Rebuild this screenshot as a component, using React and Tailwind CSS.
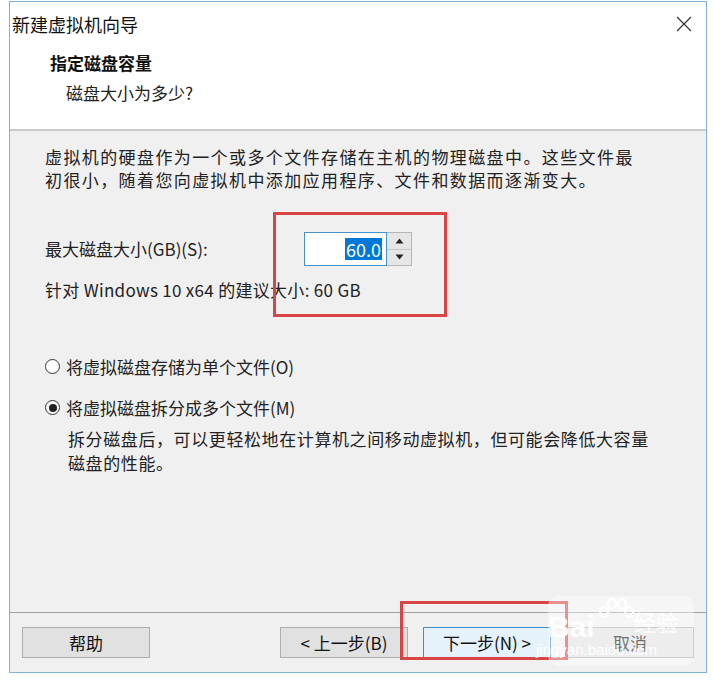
import { useState } from 'react'

const CJK = { fontFamily: '"Microsoft YaHei", "Noto Sans CJK SC", "Noto Sans", sans-serif' }

function Radio({ checked }) {
  return (
    <span className="w-[15px] h-[15px] rounded-full border border-[#333] bg-white flex items-center justify-center shrink-0">
      {checked && <span className="w-[8px] h-[8px] rounded-full bg-[#222]" />}
    </span>
  )
}

function Button({ children, active }) {
  return (
    <button
      className={`h-[31px] w-[128px] border text-[17px] text-[#111] flex items-center justify-center ${
        active ? 'border-[#3c8fd6] bg-[#e5f1fb]' : 'border-[#adadad] bg-[#e1e1e1]'
      }`}
    >
      {children}
    </button>
  )
}

function Spinner() {
  return (
    <div className="flex h-[34px]">
      <div className="w-[83px] border border-[#4a90c8] bg-white flex items-center justify-end pr-[4px]">
        <span className="bg-[#0078d7] text-white text-[18px] leading-[22px] px-[1px]">60.0</span>
      </div>
      <div className="w-[25px] flex flex-col border border-[#b5b5b5] border-l-0">
        <div className="flex-1 flex items-center justify-center bg-[#e6e6e6] border-b border-[#c8c8c8]">
          <svg width="9" height="6" viewBox="0 0 9 6"><path d="M0.5 5.5 L4.5 0.5 L8.5 5.5 Z" fill="#222" /></svg>
        </div>
        <div className="flex-1 flex items-center justify-center bg-[#e6e6e6]">
          <svg width="9" height="6" viewBox="0 0 9 6"><path d="M0.5 0.5 L4.5 5.5 L8.5 0.5 Z" fill="#222" /></svg>
        </div>
      </div>
    </div>
  )
}

export default function App() {
  const [split] = useState(true)

  return (
    <div className="w-[714px] h-[680px] bg-white relative overflow-hidden" style={CJK}>
      <div className="ml-[9px] mt-[1px] w-[698px] h-[672px] border border-[#7fb2dc] flex flex-col">
        {/* Title + header */}
        <div className="h-[129px] bg-white border-b-2 border-[#c9c9c9] flex flex-col">
          <div className="h-[44px] flex items-center justify-between pl-[2px] pr-[14px]">
            <span className="text-[18px] text-[#111]">新建虚拟机向导</span>
            <svg width="16" height="16" viewBox="0 0 16 16">
              <path d="M1 1 L15 15 M15 1 L1 15" stroke="#333" strokeWidth="1.2" />
            </svg>
          </div>
          <div className="pl-[40px] pt-[4px]">
            <p className="text-[17px] font-bold text-[#111] leading-[26px]">指定磁盘容量</p>
            <p className="text-[17px] text-[#222] leading-[26px] pl-[16px] mt-[4px]">磁盘大小为多少?</p>
          </div>
        </div>

        {/* Body */}
        <div className="flex-1 bg-[#f0f0f0] pl-[35px] pt-[14px] text-[17px] text-[#222]">
          <p className="leading-[23px] tracking-[1.4px]">
            虚拟机的硬盘作为一个或多个文件存储在主机的物理磁盘中。这些文件最
            <br />
            初很小，随着您向虚拟机中添加应用程序、文件和数据而逐渐变大。
          </p>

          <div className="flex items-center mt-[41px]">
            <span className="w-[259px]">最大磁盘大小(GB)(S):</span>
            <Spinner />
          </div>
          <p className="mt-[11px] tracking-[0.3px]">针对 Windows 10 x64 的建议大小: 60 GB</p>

          <div className="flex items-center gap-[6px] mt-[51px]">
            <Radio checked={!split} />
            <span>将虚拟磁盘存储为单个文件(O)</span>
          </div>
          <div className="flex items-center gap-[6px] mt-[16px]">
            <Radio checked={split} />
            <span>将虚拟磁盘拆分成多个文件(M)</span>
          </div>
          <p className="pl-[23px] mt-[6px] leading-[24px] tracking-[0.6px]">
            拆分磁盘后，可以更轻松地在计算机之间移动虚拟机，但可能会降低大容量
            <br />
            磁盘的性能。
          </p>
        </div>

        {/* Footer */}
        <div className="h-[60px] bg-[#f0f0f0] border-t border-[#a0a0a0] flex items-start pt-[14px] pl-[12px]">
          <Button>帮助</Button>
          <div className="ml-[130px] flex gap-[15px]">
            <Button>&lt; 上一步(B)</Button>
            <Button active>下一步(N) &gt;</Button>
            <Button>取消</Button>
          </div>
        </div>
      </div>

      {/* Red highlight boxes */}
      <div className="absolute left-[273px] top-[212px] w-[174px] h-[105px] border-[3px] border-[#d94545]" />
      <div className="absolute left-[400px] top-[601px] w-[168px] h-[59px] border-[3px] border-[#d94545]" />

      {/* Watermark */}
      <div className="absolute left-[548px] top-[596px] w-[146px] h-[70px] rounded-[10px] bg-white/40 pointer-events-none">
        <svg className="absolute left-[48px] top-[2px]" width="40" height="36" viewBox="0 0 40 36">
          <g fill="none" stroke="#fff" strokeWidth="2.5">
            <ellipse cx="8" cy="14" rx="4" ry="5" />
            <ellipse cx="16" cy="6" rx="4" ry="5" />
            <ellipse cx="26" cy="6" rx="4" ry="5" />
            <ellipse cx="33" cy="14" rx="4" ry="5" />
          </g>
        </svg>
        <span className="absolute left-[0px] top-[16px] text-[30px] font-bold text-white/90 leading-none" style={{ fontFamily: '"Liberation Sans", sans-serif' }}>Bai</span>
        <span className="absolute left-[86px] top-[14px] text-[22px] text-white/90 leading-none">经验</span>
        <span className="absolute left-[-12px] top-[46px] text-[15px] text-white/90 leading-none" style={{ fontFamily: '"Liberation Sans", sans-serif' }}>jingyan.baidu.com</span>
      </div>
    </div>
  )
}
